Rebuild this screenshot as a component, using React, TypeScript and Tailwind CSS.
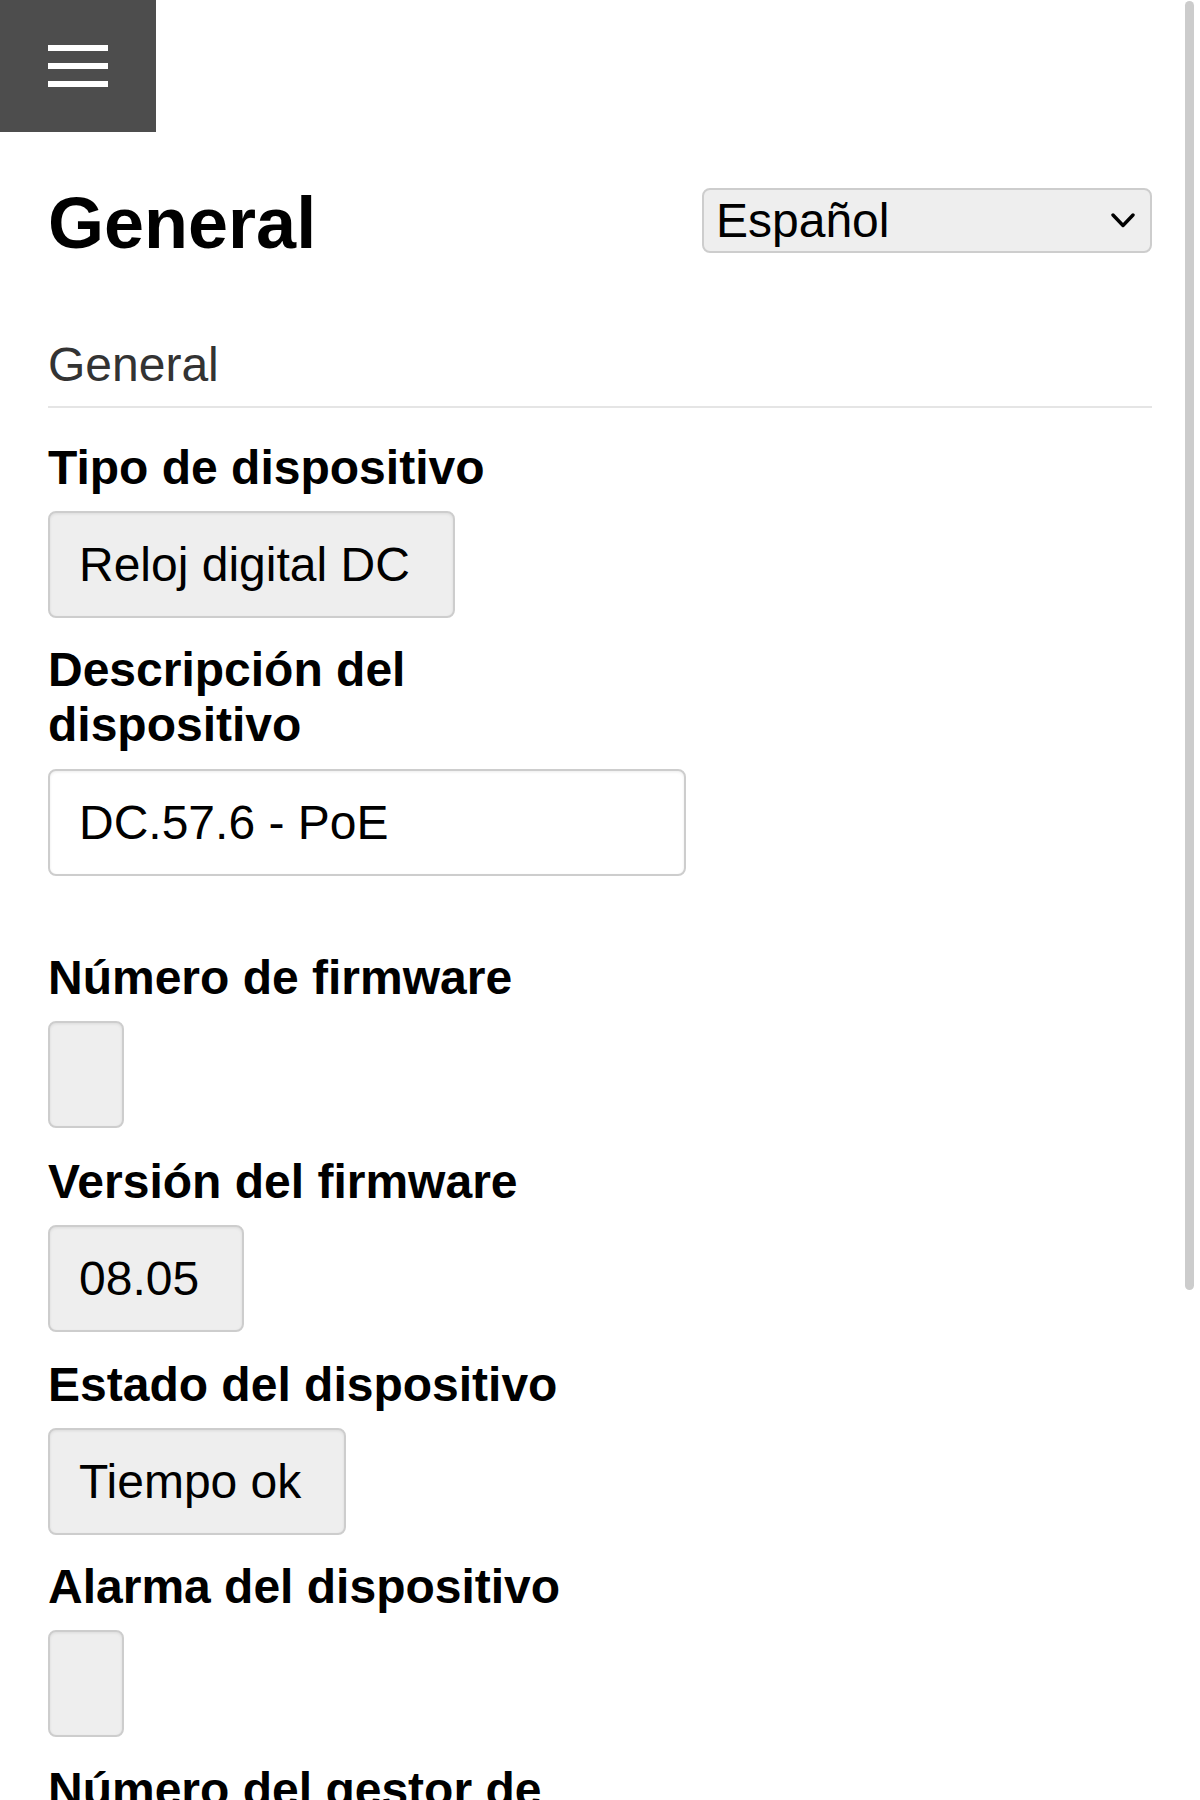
import React from "react";

function Label({ children, className = "" }: { children: React.ReactNode; className?: string }) {
  return (
    <div className={"max-w-[552px] text-[48px] font-bold text-black " + (className.includes("leading-") ? "" : "leading-[48px] ") + className}>
      {children}
    </div>
  );
}

function Box({ children, className = "" }: { children?: React.ReactNode; className?: string }) {
  return (
    <div
      className={
        "self-start h-[107px] min-w-[76px] rounded-[8px] border-2 border-[#cdcdcd] bg-[#eeeeee] pl-[29px] pr-[43px] py-[24px] text-[48px] leading-[55px] text-black whitespace-pre shadow-[inset_0_1px_3px_rgba(0,0,0,0.08)] " +
        className
      }
    >
      {children}
    </div>
  );
}

export default function App() {
  return (
    <div className="relative min-h-screen bg-white font-['Liberation_Sans',Arial,sans-serif] text-black overflow-hidden">
      {/* Hamburger */}
      <div className="flex h-[132px] w-[156px] flex-col items-center justify-center gap-[12px] bg-[#4d4d4d]">
        <div className="h-[6px] w-[60px] bg-white" />
        <div className="h-[6px] w-[60px] bg-white" />
        <div className="h-[6px] w-[60px] bg-white" />
      </div>

      <div className="flex flex-col px-12 pt-[55px]">
        <div className="flex items-start justify-between">
          <h1 className="text-[72px] leading-[72px] font-bold">General</h1>
          <div className="mt-[1px] flex h-[65px] w-[450px] items-center justify-between rounded-[8px] border-2 border-[#cdcdcd] bg-[#eeeeee] pl-[12px] pr-[15px] text-[48px] leading-[55px] text-black">
            <span>Español</span>
            <svg width="24" height="15" viewBox="0 0 24 15" fill="none">
              <polyline points="2,2 12,12.5 22,2" stroke="#000" strokeWidth="3.4" strokeLinecap="round" strokeLinejoin="round" />
            </svg>
          </div>
        </div>

        <div className="mt-[82px] border-b-2 border-[#e5e5e5] pb-[17px] text-[48px] leading-[48px] text-[#333333]">
          General
        </div>

        <div className="mt-[36px] flex flex-col">
          <Label>Tipo de dispositivo</Label>
          <Box className="mt-[19px]">Reloj digital DC</Box>

          <Label className="mt-[24px] leading-[55px]">Descripción del dispositivo</Label>
          <div className="mt-[17px] h-[107px] w-[638px] rounded-[8px] border-2 border-[#cdcdcd] bg-white pl-[29px] py-[24px] text-[48px] leading-[55px] text-black shadow-[inset_0_1px_3px_rgba(0,0,0,0.08)]">
            DC.57.6 - PoE
          </div>

          <Label className="mt-[78px]">Número de firmware</Label>
          <Box className="mt-[19px]" />

          <Label className="mt-[30px]">Versión del firmware</Label>
          <Box className="mt-[19px]">08.05</Box>

          <Label className="mt-[29px]">Estado del dispositivo</Label>
          <Box className="mt-[19px]">Tiempo ok</Box>

          <Label className="mt-[28px]">Alarma del dispositivo</Label>
          <Box className="mt-[19px]" />

          <Label className="mt-[29px]">Número del gestor de tiempo</Label>
          <Box className="mt-[19px]">1</Box>
        </div>
      </div>

      {/* overlay scrollbar */}
      <div className="absolute right-[6px] top-[1px] h-[1289px] w-[9px] rounded-full bg-[#cccccc]" />
    </div>
  );
}
